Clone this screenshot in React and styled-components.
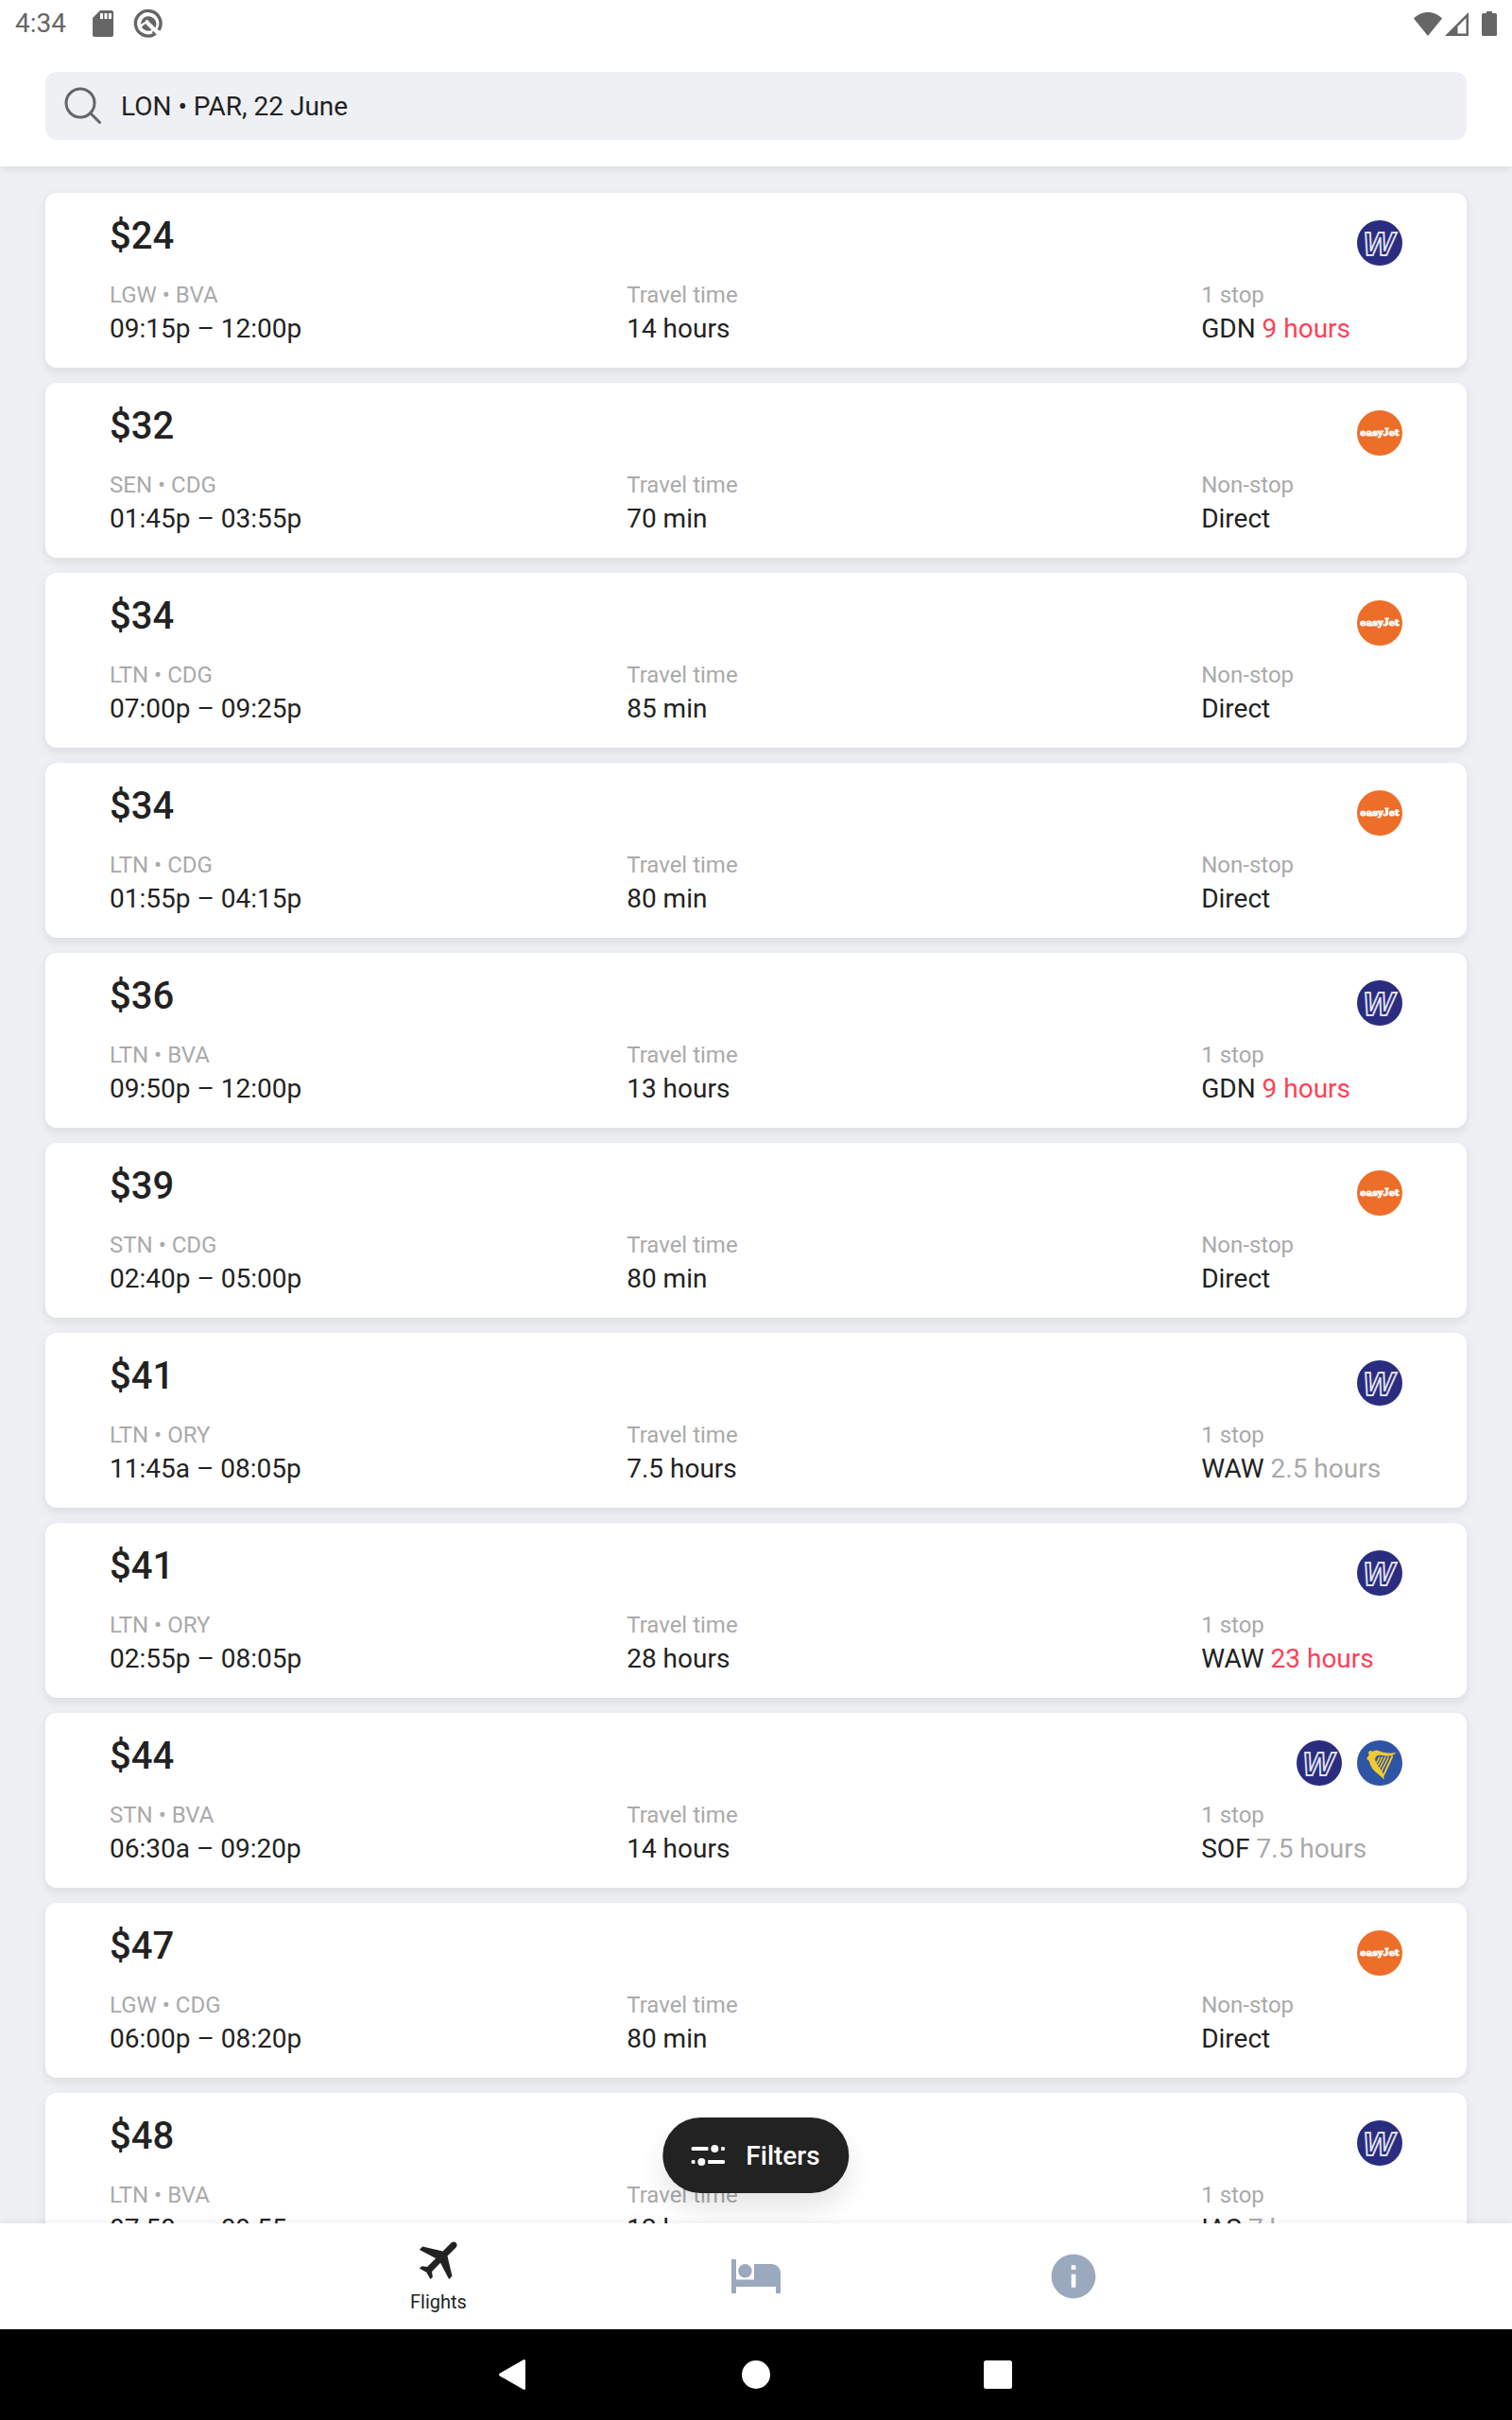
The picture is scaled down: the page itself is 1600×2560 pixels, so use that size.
import React, { useState } from 'react'
import styled, { createGlobalStyle } from 'styled-components'

const GlobalStyle = createGlobalStyle`
  * {
    box-sizing: border-box;
  }
  body {
    margin: 0;
    background: #eff0f4;
    color: #222;
    font-family: Roboto, 'Liberation Sans', sans-serif;
  }
  button, input {
    font-family: inherit;
    color: inherit;
    border: none;
    background: none;
    padding: 0;
  }
  svg {
    display: block;
    flex-shrink: 0;
  }
`;

const Screen = styled.div`
  display: flex;
  flex-direction: column;
  height: 100vh;
`;

const Top = styled.header`
  position: relative;
  z-index: 1;
  background: #fff;
  box-shadow: 0 2px 10px rgba(0, 0, 0, 0.1);
`;

const StatusBar = styled.div`
  display: flex;
  align-items: center;
  height: 48px;
  padding: 2px 16px 0;
  color: #666;
`;

const Clock = styled.time`
  font-size: 28px;
  line-height: 36px;
  margin-right: 28px;
`;

const StatusIcons = styled.div`
  display: flex;
  align-items: center;
  gap: ${props => props.$gap}px;
`;

const Battery = styled.svg`
  margin-left: 14px;
`;

const Spacer = styled.div`
  flex: 1;
`;

const SearchBox = styled.label`
  display: flex;
  align-items: center;
  gap: 20px;
  height: 72px;
  margin: 28px 48px;
  padding: 0 20px;
  border-radius: 12px;
  background: #eff0f4;
`;

const SearchInput = styled.input`
  flex: 1;
  min-width: 0;
  padding-top: 2px;
  font-size: 28px;
  line-height: 36px;
  outline: none;
`;

const List = styled.main`
  flex: 1;
  min-height: 0;
  display: flex;
  flex-direction: column;
  gap: 16px;
  padding: 28px 48px;
  overflow-y: auto;
  scrollbar-width: none;
`;

const Card = styled.article`
  flex-shrink: 0;
  padding: 20px 68px 22px;
  border-radius: 12px;
  background: #fff;
  box-shadow: 0 4px 12px rgba(0, 0, 0, 0.09);
`;

const CardHead = styled.div`
  display: flex;
  align-items: center;
  justify-content: space-between;
  height: 66px;
  margin-bottom: 5px;
`;

const Price = styled.h2`
  align-self: flex-start;
  margin: 0;
  font-size: 40px;
  font-weight: 500;
  line-height: 52px;
`;

const Airlines = styled.div`
  display: flex;
  gap: 16px;
`;

const Details = styled.div`
  display: grid;
  grid-template-columns: 18fr 20fr 7fr;
  white-space: nowrap;
`;

const Label = styled.div`
  font-size: 24px;
  line-height: 34px;
  color: #aaa;
`;

const Value = styled.div`
  font-size: 28px;
  line-height: 38px;
`;

const Layover = styled.span`
  color: ${props => (props.$long ? '#ff4057' : '#aaa')};
`;

const Bottom = styled.footer`
  position: relative;
  z-index: 1;
  background: #fff;
  box-shadow: 0 -1px 8px rgba(0, 0, 0, 0.07);
`;

const FiltersButton = styled.button`
  position: absolute;
  bottom: calc(100% + 32px);
  left: 50%;
  transform: translateX(-50%);
  z-index: -1;
  display: flex;
  align-items: center;
  gap: 22px;
  height: 80px;
  padding: 0 31px 0 30px;
  border-radius: 40px;
  background: #222;
  color: #fff;
  font-size: 28px;
  font-weight: 500;
  box-shadow: 0 16px 28px rgba(0, 0, 0, 0.1);
`;

const Tabs = styled.nav`
  display: flex;
  justify-content: center;
  height: 112px;
  background: #fff;
`;

const Tab = styled.button`
  display: flex;
  flex-direction: column;
  align-items: center;
  justify-content: center;
  gap: 10px;
  flex: 0 1 336px;
  padding-top: ${props => (props.$active ? '3px' : '0')};
  color: ${props => (props.$active ? '#222' : '#9aa9bd')};
  font-size: 20px;
  line-height: 28px;
`;

const SystemBar = styled.div`
  display: flex;
  justify-content: center;
  height: 96px;
  background: #000;
`;

const SystemButton = styled.button`
  display: flex;
  align-items: center;
  justify-content: center;
  flex: 0 1 256px;
`;

const WizzLogo = () => (
  <svg width="48" height="48" viewBox="0 0 48 48" role="img" aria-label="Wizz Air">
    <circle cx="24" cy="24" r="24" fill="#2a2d7f" />
    <text x="23" y="37" textAnchor="middle" fontFamily="'Liberation Sans', sans-serif" fontWeight="700"
      fontStyle="italic" fontSize="35" fill="#2a2d7f" stroke="#e4e4f2" strokeWidth="1.8">W</text>
  </svg>
)

const EasyJetLogo = () => (
  <svg width="48" height="48" viewBox="0 0 48 48" role="img" aria-label="easyJet">
    <circle cx="24" cy="24" r="24" fill="#ec6e29" />
    <text x="24" y="27" textAnchor="middle" fontFamily="'DejaVu Serif', serif" fontWeight="700"
      fontSize="10" fill="#fff" stroke="#fff" strokeWidth="0.8">
      easy<tspan fontFamily="'Liberation Serif', serif" fontSize="12">J</tspan>et
    </text>
  </svg>
)

const RyanairLogo = () => (
  <svg width="48" height="48" viewBox="0 0 48 48" role="img" aria-label="Ryanair">
    <circle cx="24" cy="24" r="24" fill="#2e55a5" />
    <g fill="#f2c931">
      <circle cx="14.6" cy="13.6" r="2.500" />
      <path d="M16 13.200C18 10.200 20.600 10 24 11.400c5.500 2 11.500 2.600 17.600 1.700-2.600 2.900-6.800 4.100-11.600 3.400-4.500-.6-7.500-1.200-9.300.3-1.600 1.300-1.900 3.600-.9 5.900 1.700 4 5.500 8.100 7.400 11.500 1.300 2.500 1.700 4.900 1.200 7.300-2.600-3.600-6.400-5.500-9.800-8.900-3.200-3.200-4.600-6.200-5.200-9-.3-1.600-1.400-2.600-3-3.600 0-2 1.400-4 5.600-6.800z" />
    </g>
    <g stroke="#f2c931" strokeWidth="1.600" fill="none">
      <path d="M37.500 16.500 L28 37" strokeWidth="1.900" />
      <path d="M33.500 17.500 L25.800 33" />
      <path d="M30.200 17.500 L23.800 30" />
      <path d="M27 17.500 L22 27" />
      <path d="M24 17.500 L20.300 24.500" />
    </g>
  </svg>
)

const logos = { wizz: WizzLogo, easyjet: EasyJetLogo, ryanair: RyanairLogo }

const SdCardIcon = () => (
  <svg width="22" height="28" viewBox="0 0 22 28" fill="currentColor">
    <path fillRule="evenodd" d="M8 0h12a2 2 0 0 1 2 2v24a2 2 0 0 1-2 2H2a2 2 0 0 1-2-2V8zM8 3v6h3V3zm4.500 0v6h3V3zM17 3v6h3V3z" />
  </svg>
)

const DebugIcon = () => (
  <svg width="32" height="32" viewBox="0 0 32 32" fill="none">
    <path d="M22.500 27.200A13.300 13.300 0 1 1 27 22.800" stroke="currentColor" strokeWidth="3.400" />
    <path d="M8 16.500a8.200 8.200 0 1 1 14.500 5.200l-9-8.200z" fill="currentColor" />
    <path d="M8.800 19.600l4.200-3.600 6.600 6.800a8.200 8.200 0 0 1-10.800-3.200z" fill="currentColor" />
    <path d="M13.500 12.500L28 27" stroke="#fff" strokeWidth="2.600" />
    <path d="M20.500 24.500l3.500 3.600" stroke="#666" strokeWidth="2" />
  </svg>
)

const WifiIcon = () => (
  <svg width="30" height="25" viewBox="0 0 30 25" fill="currentColor">
    <path d="M15 25L0 6.500C4 2.500 9 0 15 0s11 2.500 15 6.500z" />
  </svg>
)

const SignalIcon = () => (
  <svg width="25" height="25" viewBox="0 0 25 25" fill="currentColor">
    <path fillRule="evenodd" d="M25 0v25H0zM22.500 6L13.500 15v7.500h9z" />
  </svg>
)

const BatteryIcon = () => (
  <Battery width="16" height="26" viewBox="0 0 16 26" fill="currentColor">
    <path d="M5 0h6v2h3.500A1.500 1.500 0 0 1 16 3.500v21a1.500 1.500 0 0 1-1.500 1.500h-13A1.500 1.500 0 0 1 0 24.500v-21A1.500 1.500 0 0 1 1.500 2H5z" />
  </Battery>
)

const SearchIcon = () => (
  <svg width="40" height="40" viewBox="0 0 40 40" fill="none" stroke="#666" strokeWidth="3" strokeLinecap="round">
    <circle cx="17" cy="17" r="15" />
    <path d="M27.500 27.500L37.500 37.500" />
  </svg>
)

const SlidersIcon = () => (
  <svg width="36" height="22" viewBox="0 0 36 22" stroke="#fff" strokeWidth="4" strokeLinecap="round">
    <path d="M2 4h14M34 4h0M2 18h0M20 18h14" />
    <path d="M14 4h4M32 4h1M3 18h1M18 18h4" strokeLinecap="butt" />
    <circle cx="25" cy="4" r="4" fill="#fff" stroke="none" />
    <circle cx="11" cy="18" r="4" fill="#fff" stroke="none" />
  </svg>
)

const PlaneIcon = () => (
  <svg width="40" height="40" viewBox="2 4.300 17.200 17.200" fill="currentColor">
    <path transform="rotate(45 11.500 12)" d="M21 16v-2l-8-5V3.500c0-.83-.67-1.500-1.500-1.500S10 2.670 10 3.500V9l-8 5v2l8-2.500V19l-2 1.500V22l3.500-1 3.500 1v-1.500L13 19v-5.500l8 2.500z" />
  </svg>
)

const BedIcon = () => (
  <svg width="52" height="36" viewBox="0 0 52 36" fill="currentColor">
    <path d="M0 0h5v21.500h19V5h18.500a9.500 9.500 0 0 1 9.500 9.500V36h-5v-7H5v7H0z" />
    <circle cx="14.400" cy="12.300" r="7.200" />
  </svg>
)

const InfoIcon = () => (
  <svg width="56" height="56" viewBox="0 0 24 24" fill="currentColor">
    <path d="M12 2C6.480 2 2 6.480 2 12s4.480 10 10 10 10-4.480 10-10S17.520 2 12 2zm1 15h-2v-6h2v6zm0-8h-2V7h2v2z" />
  </svg>
)

const flights = [
  { price: 24, route: 'LGW • BVA', time: '09:15p – 12:00p', travel: '14 hours', via: 'GDN', layover: '9 hours', long: true, airlines: ['wizz'] },
  { price: 32, route: 'SEN • CDG', time: '01:45p – 03:55p', travel: '70 min', airlines: ['easyjet'] },
  { price: 34, route: 'LTN • CDG', time: '07:00p – 09:25p', travel: '85 min', airlines: ['easyjet'] },
  { price: 34, route: 'LTN • CDG', time: '01:55p – 04:15p', travel: '80 min', airlines: ['easyjet'] },
  { price: 36, route: 'LTN • BVA', time: '09:50p – 12:00p', travel: '13 hours', via: 'GDN', layover: '9 hours', long: true, airlines: ['wizz'] },
  { price: 39, route: 'STN • CDG', time: '02:40p – 05:00p', travel: '80 min', airlines: ['easyjet'] },
  { price: 41, route: 'LTN • ORY', time: '11:45a – 08:05p', travel: '7.5 hours', via: 'WAW', layover: '2.5 hours', airlines: ['wizz'] },
  { price: 41, route: 'LTN • ORY', time: '02:55p – 08:05p', travel: '28 hours', via: 'WAW', layover: '23 hours', long: true, airlines: ['wizz'] },
  { price: 44, route: 'STN • BVA', time: '06:30a – 09:20p', travel: '14 hours', via: 'SOF', layover: '7.5 hours', airlines: ['wizz', 'ryanair'] },
  { price: 47, route: 'LGW • CDG', time: '06:00p – 08:20p', travel: '80 min', airlines: ['easyjet'] },
  { price: 48, route: 'LTN • BVA', time: '07:50p – 09:55p', travel: '12 hours', via: 'IAS', layover: '7 hours', airlines: ['wizz'] },
]

const FlightCard = ({ flight }) => (
  <Card>
    <CardHead>
      <Price>${flight.price}</Price>
      <Airlines>
        {flight.airlines.map(name => {
          const Logo = logos[name]
          return <Logo key={name} />
        })}
      </Airlines>
    </CardHead>
    <Details>
      <div>
        <Label>{flight.route}</Label>
        <Value>{flight.time}</Value>
      </div>
      <div>
        <Label>Travel time</Label>
        <Value>{flight.travel}</Value>
      </div>
      <div>
        <Label>{flight.via ? '1 stop' : 'Non-stop'}</Label>
        <Value>
          {flight.via ? <>{flight.via} <Layover $long={flight.long}>{flight.layover}</Layover></> : 'Direct'}
        </Value>
      </div>
    </Details>
  </Card>
)

const App = () => {

  const [query, setQuery] = useState('LON • PAR, 22 June')
  const [tab, setTab] = useState('Flights')

  const tabs = [
    { name: 'Flights', Icon: PlaneIcon },
    { name: 'Hotels', Icon: BedIcon },
    { name: 'Info', Icon: InfoIcon },
  ]

  return (
    <Screen>
      <GlobalStyle />
      <Top>
        <StatusBar>
          <Clock>4:34</Clock>
          <StatusIcons $gap={21}>
            <SdCardIcon />
            <DebugIcon />
          </StatusIcons>
          <Spacer />
          <StatusIcons $gap={3}>
            <WifiIcon />
            <SignalIcon />
          </StatusIcons>
          <BatteryIcon />
        </StatusBar>
        <SearchBox>
          <SearchIcon />
          <SearchInput aria-label="Search flights" value={query} onChange={e => setQuery(e.target.value)} />
        </SearchBox>
      </Top>

      <List>
        {flights.map((flight, i) => <FlightCard key={i} flight={flight} />)}
      </List>

      <Bottom>
        <FiltersButton>
          <SlidersIcon />
          Filters
        </FiltersButton>
        <Tabs>
          {tabs.map(({ name, Icon }) => (
            <Tab key={name} aria-label={name} $active={tab === name} onClick={() => setTab(name)}>
              <Icon />
              {tab === name && <span>{name}</span>}
            </Tab>
          ))}
        </Tabs>
        <SystemBar>
          <SystemButton aria-label="Back">
            <svg width="32" height="32" viewBox="0 0 32 32" fill="#fff">
              <path d="M1 14.500L26 .3a1.500 1.500 0 0 1 2 1.400v28.600a1.500 1.500 0 0 1-2 1.400L1 17.500a1.700 1.700 0 0 1 0-3z" />
            </svg>
          </SystemButton>
          <SystemButton aria-label="Home">
            <svg width="30" height="30" viewBox="0 0 30 30" fill="#fff"><circle cx="15" cy="15" r="15" /></svg>
          </SystemButton>
          <SystemButton aria-label="Recent apps">
            <svg width="30" height="30" viewBox="0 0 30 30" fill="#fff"><rect width="30" height="30" rx="2.500" /></svg>
          </SystemButton>
        </SystemBar>
      </Bottom>
    </Screen>
  )
}

export default App
